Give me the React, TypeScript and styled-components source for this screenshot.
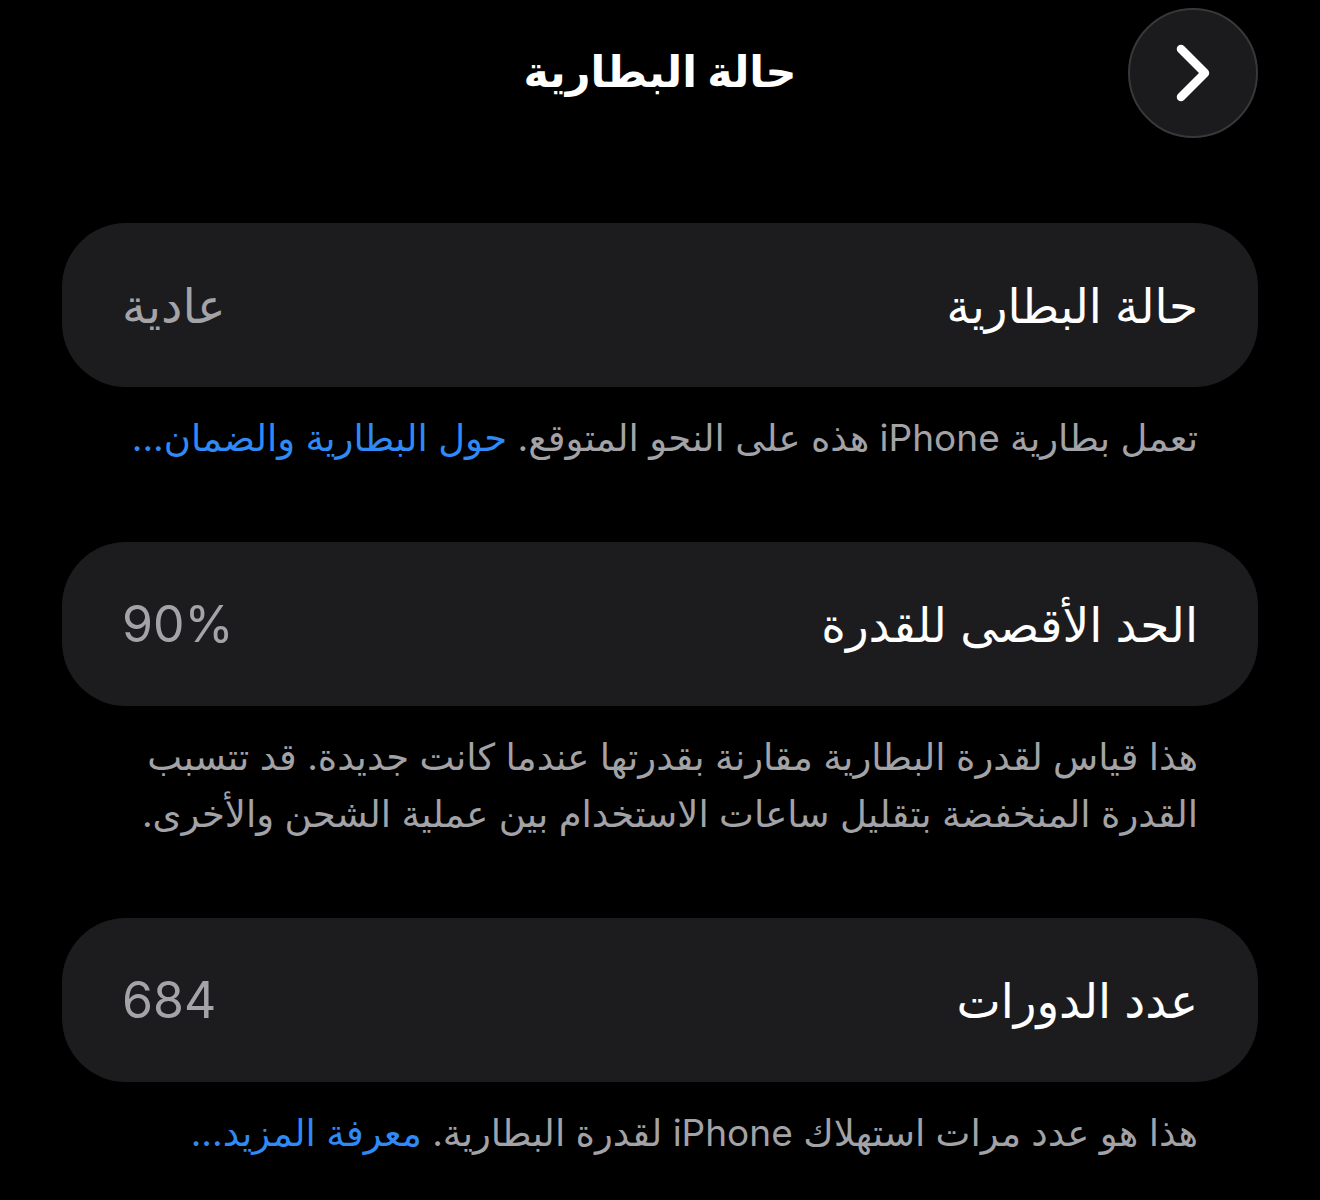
import React from "react";
import styled, { createGlobalStyle } from "styled-components";

const GlobalStyle = createGlobalStyle`
  html, body {
    margin: 0;
    padding: 0;
    background: #000;
  }
  body {
    font-family: "Inter", "DejaVu Sans", sans-serif;
    -webkit-font-smoothing: antialiased;
  }
`;

const Screen = styled.div`
  direction: rtl;
  min-height: 1200px;
  background: #000;
  color: #fff;
  padding: 8px 62px 0;
  box-sizing: border-box;
`;

const Header = styled.header`
  display: grid;
  grid-template-columns: 130px 1fr 130px;
  align-items: center;
  height: 130px;
  margin-bottom: 85px;
`;

const BackButton = styled.button`
  width: 130px;
  height: 130px;
  border-radius: 50%;
  background: #1b1b1d;
  border: 2px solid #38383b;
  display: flex;
  align-items: center;
  justify-content: center;
  padding: 0;
  cursor: pointer;
`;

const Title = styled.h1`
  margin: 0 0 4px;
  text-align: center;
  font-size: 43px;
  font-weight: 700;
  color: #fff;
`;

const Section = styled.section`
  margin-bottom: 76px;
`;

const Card = styled.div`
  height: 164px;
  border-radius: 64px;
  background: #1c1c1e;
  display: flex;
  align-items: center;
  justify-content: space-between;
  padding: 0 60px;
`;

const Label = styled.span`
  font-size: 47px;
  color: #fff;
`;

const Value = styled.span`
  font-size: 48px;
  color: #a3a3a8;
`;

const Number = styled.span`
  font-family: "Inter", "Roboto", sans-serif;
  font-size: 50px;
  color: #a3a3a8;
  direction: ltr;
`;

const Footer = styled.p`
  margin: 0;
  padding: 22px 60px 0;
  font-size: 37px;
  line-height: 57px;
  color: #a2a2a7;
`;

const Link = styled.a`
  color: #2f8af5;
  text-decoration: none;
`;

const Chevron = () => (
  <svg width="40" height="60" viewBox="0 0 40 60" fill="none">
    <path
      d="M8 6 L32 30 L8 54"
      stroke="#fff"
      strokeWidth="8.5"
      strokeLinecap="round"
      strokeLinejoin="round"
    />
  </svg>
);

export default function App() {
  return (
    <>
      <GlobalStyle />
      <Screen>
        <Header>
          <BackButton aria-label="رجوع">
            <Chevron />
          </BackButton>
          <Title>حالة البطارية</Title>
          <span />
        </Header>

        <Section>
          <Card>
            <Label>حالة البطارية</Label>
            <Value>عادية</Value>
          </Card>
          <Footer>
            تعمل بطارية iPhone هذه على النحو المتوقع.{" "}
            <Link href="#">حول البطارية والضمان...</Link>
          </Footer>
        </Section>

        <Section>
          <Card>
            <Label>الحد الأقصى للقدرة</Label>
            <Number>90%</Number>
          </Card>
          <Footer>
            هذا قياس لقدرة البطارية مقارنة بقدرتها عندما كانت جديدة. قد تتسبب
            القدرة المنخفضة بتقليل ساعات الاستخدام بين عملية الشحن والأخرى.
          </Footer>
        </Section>

        <Section>
          <Card>
            <Label>عدد الدورات</Label>
            <Number>684</Number>
          </Card>
          <Footer>
            هذا هو عدد مرات استهلاك iPhone لقدرة البطارية.{" "}
            <Link href="#">معرفة المزيد...</Link>
          </Footer>
        </Section>
      </Screen>
    </>
  );
}
